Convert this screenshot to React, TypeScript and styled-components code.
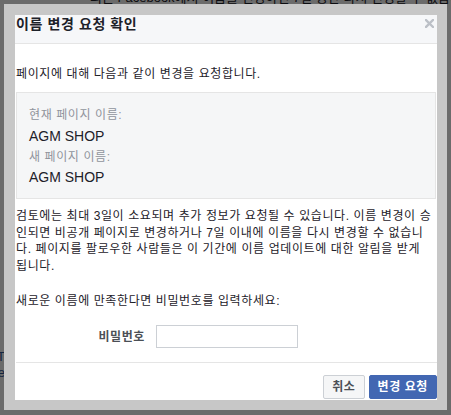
import styled, { createGlobalStyle } from "styled-components";

const GlobalStyle = createGlobalStyle`
  html, body, #root {
    margin: 0;
    height: 100%;
  }
  body {
    background: #fff;
    font-family: "Liberation Sans", "Noto Sans CJK KR", sans-serif;
  }
`;

// page under the dimmed layer
const Page = styled.div`
  height: 100%;
  overflow: hidden;
`;

const PageNotice = styled.div`
  margin: -10px 0 0 90px;
  font-size: 13px;
  line-height: 16px;
  color: #1d2129;
  white-space: nowrap;
`;

const SideLinks = styled.div`
  width: 5px;
  margin-top: 343px;
  overflow: hidden;
  display: flex;
  flex-direction: column;
  align-items: flex-end;
`;

const SideLink = styled.span`
  font-size: 13px;
  line-height: 16px;
  color: #365899;
  white-space: nowrap;
`;

const Overlay = styled.div`
  position: fixed;
  inset: 0;
  background: rgba(0, 0, 0, 0.58);
  padding: 4px 4px 5px 4px;
  box-sizing: border-box;
`;

const Frame = styled.div`
  width: 443px;
  height: 406px;
  box-sizing: border-box;
  padding: 11px 10px 10px 11px;
  background: #c7c7c7;
`;

// Hangul glyphs get a little tracking so the lines keep their width
const Dialog = styled.div`
  width: 422px;
  height: 385px;
  background: #fff;
  overflow: hidden;
  color: #1d2129;
  letter-spacing: 0.6px;
`;

const Header = styled.div`
  height: 29px;
  box-sizing: border-box;
  display: flex;
  justify-content: space-between;
  align-items: flex-start;
  padding: 0 3px 0 1px;
  background: #f6f7f9;
  border-bottom: 1px solid #e5e5e5;
`;

const Title = styled.h2`
  margin: 0;
  font-size: 14px;
  line-height: 18px;
  font-weight: bold;
  color: #1d2129;
`;

const CloseButton = styled.button`
  margin-top: 4px;
  padding: 0;
  border: 0;
  background: none;
  display: flex;
  cursor: pointer;
`;

const Content = styled.div`
  padding: 0 1px;
  font-size: 12px;
`;

const Lead = styled.p`
  margin: 22px 0 0;
  line-height: 16px;
`;

const InfoBox = styled.div`
  margin-top: 10px;
  padding: 14px 12px 12px;
  background: #f5f6f7;
  border: 1px solid #e5e5e5;
`;

const InfoLabel = styled.div<{ $gap?: number }>`
  margin-top: ${(p) => p.$gap ?? 0}px;
  font-size: 12px;
  line-height: 16px;
  color: #90949c;
`;

const InfoName = styled.div<{ $gap: number }>`
  margin-top: ${(p) => p.$gap}px;
  font-size: 14px;
  line-height: 18px;
  letter-spacing: 0;
  color: #1d2129;
`;

const Notice = styled.p`
  margin: 9px 0 0;
  line-height: 16.5px;
`;

const Word = styled.span`
  white-space: nowrap;
`;

const Prompt = styled.p`
  margin: 19px 0 0;
  line-height: 16px;
`;

const PasswordRow = styled.div`
  margin-top: 16px;
  display: grid;
  grid-template-columns: 129px 142px;
  column-gap: 11px;
  align-items: center;
`;

const FieldLabel = styled.label`
  text-align: right;
  font-weight: bold;
  color: #4b4f56;
  line-height: 16px;
`;

const PasswordInput = styled.input`
  height: 23px;
  box-sizing: border-box;
  border: 1px solid #ccd0d5;
  padding: 0 4px;
  font-size: 12px;
  outline: none;
`;

const Footer = styled.div`
  margin: 14px -1px 0 0;
  padding-top: 12px;
  border-top: 1px solid #e5e5e5;
  display: flex;
  justify-content: flex-end;
  gap: 4px;
`;

const Button = styled.button<{ $primary?: boolean }>`
  height: 24px;
  padding: 0 8px;
  border: 1px solid ${(p) => (p.$primary ? "#4267b2" : "#ccd0d5")};
  border-radius: 2px;
  background: ${(p) => (p.$primary ? "#4267b2" : "#f5f6f7")};
  color: ${(p) => (p.$primary ? "#fff" : "#4b4f56")};
  font-family: inherit;
  font-size: 12px;
  font-weight: bold;
  letter-spacing: inherit;
  line-height: 22px;
  cursor: pointer;
`;

const CloseIcon = () => (
  <svg width="9" height="9" viewBox="0 0 9 9">
    <path d="M1 1 L8 8 M8 1 L1 8" stroke="#bcc0c7" strokeWidth="2.4" strokeLinecap="square" />
  </svg>
);

const App = () => {
  return (
    <>
      <GlobalStyle />
      <Page>
        <PageNotice>최근 Facebook에서 이름을 변경하면 7일 동안 다시 변경할 수 없습니다</PageNotice>
        <SideLinks>
          <SideLink>AGM SHOPT</SideLink>
          <SideLink>More</SideLink>
        </SideLinks>
      </Page>
      <Overlay>
        <Frame>
          <Dialog>
            <Header>
              <Title>이름 변경 요청 확인</Title>
              <CloseButton aria-label="닫기">
                <CloseIcon />
              </CloseButton>
            </Header>
            <Content>
              <Lead>페이지에 대해 다음과 같이 변경을 요청합니다.</Lead>
              <InfoBox>
                <InfoLabel>현재 페이지 이름:</InfoLabel>
                <InfoName $gap={4}>AGM SHOP</InfoName>
                <InfoLabel $gap={4}>새 페이지 이름:</InfoLabel>
                <InfoName $gap={3}>AGM SHOP</InfoName>
              </InfoBox>
              <Notice>
                검토에는 최대 3일이 소요되며 추가 정보가 요청될 수 있습니다. 이름 변경이 승인되면 비공개 페이지로 변경하거나 7일 이내에 이름을 다시 변경할 수 없습니다. 페이지를 팔로우한 사람들은 이 기간에 이름 업데이트에 대한 알림을 받게 <Word>됩니다.</Word>
              </Notice>
              <Prompt>새로운 이름에 만족한다면 비밀번호를 입력하세요:</Prompt>
              <PasswordRow>
                <FieldLabel htmlFor="page-password">비밀번호</FieldLabel>
                <PasswordInput id="page-password" type="password" />
              </PasswordRow>
              <Footer>
                <Button>취소</Button>
                <Button $primary>변경 요청</Button>
              </Footer>
            </Content>
          </Dialog>
        </Frame>
      </Overlay>
    </>
  );
};

export default App;
